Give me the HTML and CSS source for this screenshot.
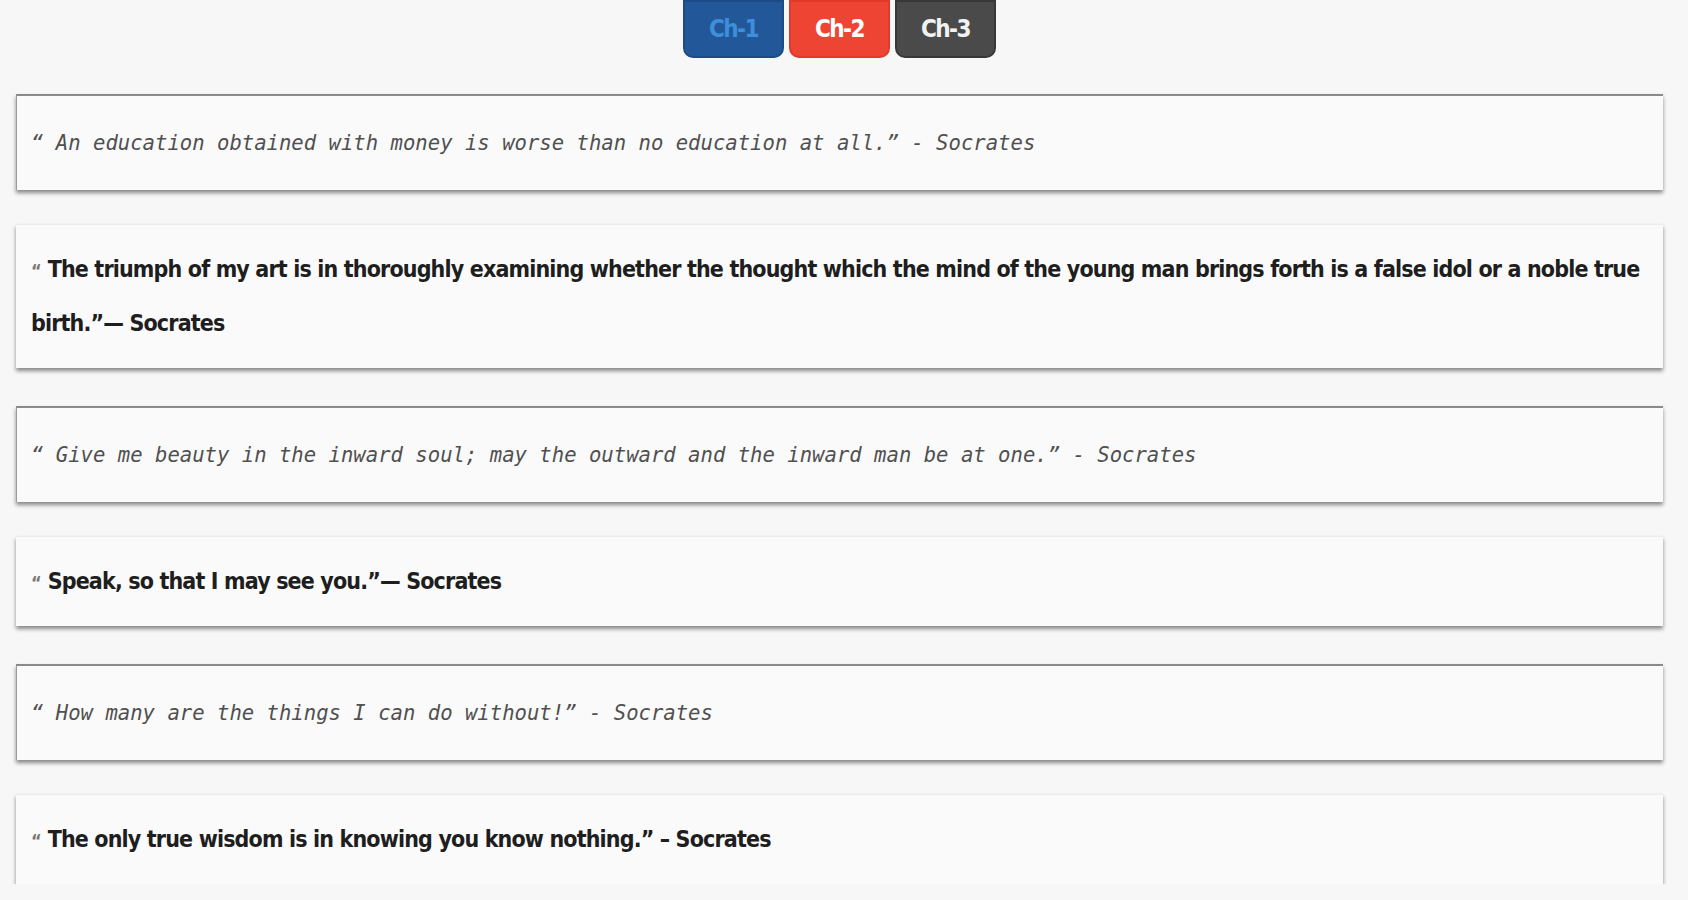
FILE: index.html
```html
<!DOCTYPE html>
<html lang="en">
<head>
    <meta charset="UTF-8">
    <meta name="viewport" content="width=device-width, initial-scale=1.0">
    <title>Socrates Quotes</title>
    <link rel="stylesheet" href="styles.css">
</head>
<body>
    <div class="page">
        <div class="chapter-tabs">
            <button class="tab tab-blue">Ch-1</button>
            <button class="tab tab-red">Ch-2</button>
            <button class="tab tab-dark">Ch-3</button>
        </div>

        <div class="quote-list">
            <div class="quote quote-mono">&ldquo; An education obtained with money is worse than no education at all.&rdquo; - Socrates</div>
            <div class="quote quote-sans"><span class="open">&ldquo;</span>The triumph of my art is in thoroughly examining whether the thought which the mind of the young man brings forth is a false idol or a noble true birth.&rdquo;&mdash; Socrates</div>
            <div class="quote quote-mono">&ldquo; Give me beauty in the inward soul; may the outward and the inward man be at one.&rdquo; - Socrates</div>
            <div class="quote quote-sans"><span class="open">&ldquo;</span>Speak, so that I may see you.&rdquo;&mdash; Socrates</div>
            <div class="quote quote-mono">&ldquo; How many are the things I can do without!&rdquo; - Socrates</div>
            <div class="quote quote-sans"><span class="open">&ldquo;</span>The only true wisdom is in knowing you know nothing.&rdquo; &ndash; Socrates</div>
        </div>
    </div>
</body>
</html>
```

FILE: styles.css
```css
body {
    margin: 0;
    background-color: #f7f7f7;
    font-family: "Liberation Sans Narrow", "DejaVu Sans Condensed", "Liberation Sans", sans-serif;
}

.page {
    padding: 0 25px 0 16px;
}

.chapter-tabs {
    display: flex;
    justify-content: center;
    gap: 5px;
}

.tab {
    width: 101px;
    height: 58px;
    border: 2px solid transparent;
    border-radius: 0 0 10px 10px;
    font-family: inherit;
    font-size: 24px;
    font-weight: bold;
    letter-spacing: -1.5px;
    color: white;
    cursor: pointer;
}

.tab-blue {
    background-color: #22589a;
    border-color: #1b4c88;
    color: #3d8fd9;
}

.tab-red {
    background-color: #ee4434;
    border-color: #e23a2a;
}

.tab-dark {
    background-color: #4a4a4a;
    border-color: #383838;
    color: #f2f2f2;
}

.quote {
    background-color: #fafafa;
    box-shadow: 0 3px 4px rgba(0, 0, 0, 0.45);
    line-height: 54px;
}

.quote-mono {
    margin-top: 38px;
    padding: 20px 14px 20px;
    border-top: 2px solid #8a8a8a;
    border-left: 1px solid #9a9a9a;
    font-family: "DejaVu Sans Mono", monospace;
    font-style: italic;
    font-size: 20.6px;
    color: #505050;
}

.quote-list .quote:first-child {
    margin-top: 36px;
}

.quote-sans {
    margin-top: 34px;
    padding: 17px 14px 18px 15px;
    border-top: 1px solid #ececec;
    font-size: 23px;
    font-weight: bold;
    letter-spacing: -0.85px;
    color: #1e1e1e;
}

.open {
    display: inline-block;
    margin-right: 6px;
    color: #777;
    font-size: 18px;
    line-height: 1;
    letter-spacing: 0;
}
```
